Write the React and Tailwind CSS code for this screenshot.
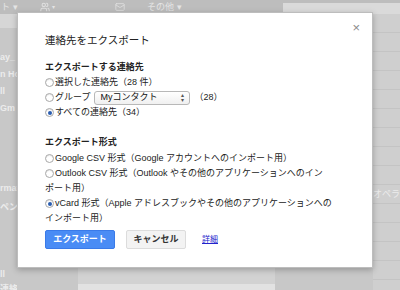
import React from 'react'
import { Users, Mail } from 'lucide-react'

const font = { fontFamily: '"Liberation Sans", "Noto Sans CJK JP", sans-serif' }

function Radio({ checked }) {
  return (
    <span className="w-[9px] h-[9px] rounded-full border border-[#a8a8a8] bg-white flex items-center justify-center shrink-0 mr-[1px] shadow-[inset_0_1px_1px_rgba(0,0,0,0.1)]">
      {checked && <span className="w-[4px] h-[4px] rounded-full bg-[#2a5db0]" />}
    </span>
  )
}

function Option({ checked, children }) {
  return (
    <div className="flex items-start h-[15px] leading-[15px]">
      <span className="h-[15px] flex items-center">
        <Radio checked={checked} />
      </span>
      <span>{children}</span>
    </div>
  )
}

export default function App() {
  return (
    <div className="relative w-[400px] h-[290px] overflow-hidden bg-[#c8c8c8] text-white" style={font}>
      {/* faded page behind the dialog */}
      <div className="flex items-center h-[14px] bg-[#bdbdbd] text-[9px] leading-[14px] text-[#e4e4e4]">
        <span className="w-[20px] pl-[1px] whitespace-nowrap">ト ▾</span>
        <span className="ml-[20px] w-[30px] flex items-center gap-[2px]">
          <Users className="w-[10px] h-[10px] text-[#e0e0e0]" strokeWidth={2.5} />
          <span className="text-[6px]">▾</span>
        </span>
        <span className="ml-[45px] w-[30px] flex items-center">
          <Mail className="w-[10px] h-[10px] text-[#e0e0e0]" strokeWidth={2} />
        </span>
        <span className="ml-[2px] whitespace-nowrap">その他 ▾</span>
        <div className="ml-auto mt-[3px] w-[117px] h-[11px] bg-[#dadada]" />
      </div>
      <div className="flex">
        <div className="w-[17px] flex flex-col text-[9px] font-bold text-[#ececec] overflow-hidden whitespace-nowrap">
          <div className="h-[14px] bg-[#d6d6d6]" />
          <div className="h-[20px]" />
          <div className="h-[18px] leading-[18px]">ay_</div>
          <div className="h-[17px] leading-[17px]">n Ho</div>
          <div className="h-[17px] leading-[17px]">ll</div>
          <div className="h-[17px] leading-[17px]">Gm</div>
          <div className="h-[62px]" />
          <div className="h-[19px] leading-[19px]">rmat</div>
          <div className="h-[19px] leading-[19px]">ペン</div>
          <div className="h-[48px]" />
          <div className="h-[18px] leading-[18px]">ll</div>
          <div className="h-[12px] leading-[12px]">連絡</div>
        </div>
        <div className="flex-1" />
        <div className="w-[27px] flex flex-col bg-[#cfcfcf]">
          {Array.from({ length: 14 }).map((_, i) => (
            <div key={i} className="h-[19px] border-b border-[#c4c4c4] text-[9px] leading-[19px] text-[#ececec] whitespace-nowrap">
              {i === 9 ? 'オペラ' : ''}
            </div>
          ))}
        </div>
      </div>
      <div className="absolute left-[78px] top-[268px] w-[197px] h-[22px] bg-[#d2d2d2]">
        <div className="mt-[16px] h-[6px] bg-[#e2e2e2]" />
      </div>

      {/* dialog */}
      <div className="absolute left-[17px] top-[12px] w-[356px] h-[256px] bg-white shadow-[0_2px_6px_rgba(0,0,0,0.25)] border border-[#bdbdbd] text-[#222] pl-[27px] pt-[20px]">
        <span className="absolute right-[12px] top-[8px] text-[13px] leading-[13px] text-[#8a8a8a]">×</span>
        <div className="text-[10.5px] leading-[14px] text-[#222]">連絡先をエクスポート</div>

        <div className="mt-[13px] text-[9px] font-bold leading-[15px]">エクスポートする連絡先</div>
        <div className="text-[9px]">
          <Option>選択した連絡先（28 件）</Option>
          <div className="flex items-center h-[15px] leading-[15px]">
            <Radio />
            <span>グループ</span>
            <div className="ml-[4px] w-[96px] h-[14px] border border-[#b8b8b8] rounded-[3px] bg-gradient-to-b from-white to-[#f0f0f0] flex items-center pl-[5px] pr-[5px] text-[#111]">
              <span className="flex-1">Myコンタクト</span>
              <span className="text-[6px] leading-[5px] flex flex-col text-[#555]">
                <span>▴</span>
                <span>▾</span>
              </span>
            </div>
            <span className="ml-[4px]">（28）</span>
          </div>
          <Option checked>すべての連絡先（34）</Option>
        </div>

        <div className="mt-[15px] text-[9px] font-bold leading-[15px]">エクスポート形式</div>
        <div className="mt-[1px] text-[9px] w-[300px]">
          <Option>Google CSV 形式（Google アカウントへのインポート用）</Option>
          <div className="leading-[15px]">
            <div className="flex items-center h-[15px]">
              <Radio />
              <span>Outlook CSV 形式（Outlook やその他のアプリケーションへのイン</span>
            </div>
            <div>ポート用）</div>
          </div>
          <div className="leading-[15px]">
            <div className="flex items-center h-[15px]">
              <Radio checked />
              <span>vCard 形式（Apple アドレスブックやその他のアプリケーションへの</span>
            </div>
            <div>インポート用）</div>
          </div>
        </div>

        <div className="mt-[4px] flex items-center">
          <button className="w-[70px] h-[19px] bg-[#4a8cf5] border border-[#3a7ae8] rounded-[2px] text-white text-[9px] font-bold">
            エクスポート
          </button>
          <button className="ml-[11px] w-[60px] h-[19px] bg-[#f3f3f3] border border-[#dcdcdc] rounded-[2px] text-[#333] text-[9px] font-bold">
            キャンセル
          </button>
          <a className="ml-[16px] text-[8px] text-[#2222cc] underline">詳細</a>
        </div>
      </div>
    </div>
  )
}
